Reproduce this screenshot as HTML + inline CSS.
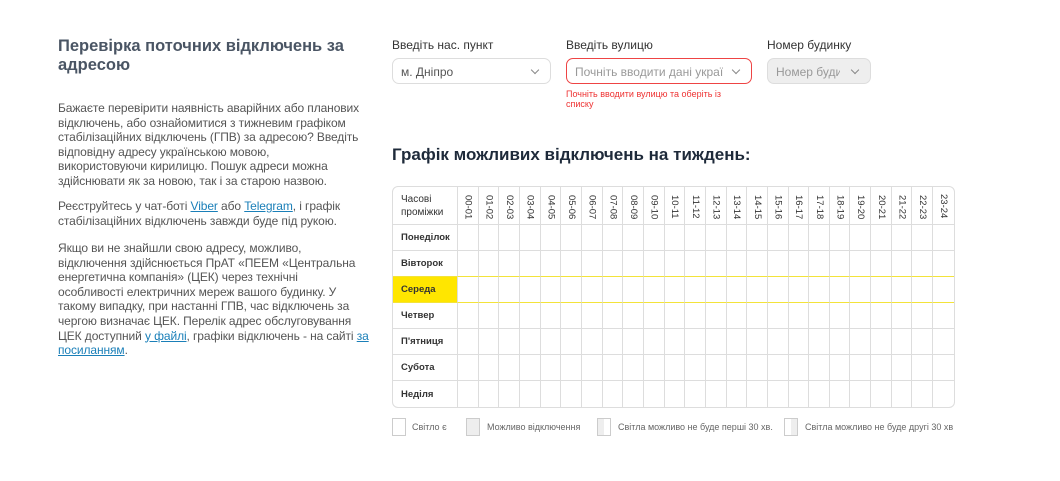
<!DOCTYPE html>
<html><head><meta charset="utf-8"><style>
*{box-sizing:border-box;margin:0;padding:0}
body{width:1060px;height:481px;background:#fff;font-family:"Liberation Sans",sans-serif;position:relative;overflow:hidden}
.l{position:absolute;left:58px;color:#555;font-size:12px;line-height:14.6px;white-space:nowrap;letter-spacing:-0.1px}
h1{position:absolute;left:58px;top:37px;font-size:16.5px;line-height:19px;color:#4a5564;font-weight:bold;width:300px}
a{color:#1a7fb8;text-decoration:underline}
.lab{position:absolute;top:38px;font-size:12px;color:#333}
.in{position:absolute;top:58px;height:26px;border:1px solid #ddd;border-radius:7px;font-size:12px;color:#555;padding:6px 8px}
.in span{display:block;white-space:nowrap;overflow:hidden}
.in:after{content:"";position:absolute;right:12px;top:8px;width:5px;height:5px;border-right:1px solid #888;border-bottom:1px solid #888;transform:rotate(45deg)}
.err{position:absolute;left:566px;top:89px;font-size:9px;line-height:10px;color:#e33;width:180px}
h2{position:absolute;left:392px;top:145px;font-size:17px;color:#1e2a3a;font-weight:bold}
table{position:absolute;left:392px;top:186px;border-collapse:separate;border-spacing:0;border:1px solid #ddd;border-radius:6px;width:563px;table-layout:fixed}
td{border-right:1px solid #ddd;border-bottom:1px solid #ddd;height:26px;font-size:9.5px;font-weight:bold;color:#333}
tr td:last-child{border-right:none}
tr:last-child td{border-bottom:none}
td.d{width:65px;padding-left:8px}
tr.h td{height:38px}
tr.h td.t{writing-mode:vertical-rl;text-align:left;padding-top:7px;font-weight:normal;font-size:9.5px;color:#333;vertical-align:top;line-height:20px}
tr.y td{border-bottom:1px solid #f3e33a}
tr.py td{border-bottom:1px solid #f3e33a}
tr.y td.d{background:#ffe600}
.lg{position:absolute;top:422px;font-size:9px;color:#666}
.bx{position:absolute;top:418px;width:14px;height:18px;border:1px solid #ccc}
</style></head><body>
<h1>Перевірка поточних відключень за адресою</h1>
<div class="l" style="top:101px">Бажаєте перевірити наявність аварійних або планових<br>відключень, або ознайомитися з тижневим графіком<br>стабілізаційних відключень (ГПВ) за адресою? Введіть<br>відповідну адресу українською мовою,<br>використовуючи кирилицю. Пошук адреси можна<br>здійснювати як за новою, так і за старою назвою.</div>
<div class="l" style="top:199px">Реєструйтесь у чат-боті <a>Viber</a> або <a>Telegram</a>, і графік<br>стабілізаційних відключень завжди буде під рукою.</div>
<div class="l" style="top:241px">Якщо ви не знайшли свою адресу, можливо,<br>відключення здійснюється ПрАТ «ПЕЕМ «Центральна<br>енергетична компанія» (ЦЕК) через технічні<br>особливості електричних мереж вашого будинку. У<br>такому випадку, при настанні ГПВ, час відключень за<br>чергою визначає ЦЕК. Перелік адрес обслуговування<br>ЦЕК доступний <a>у файлі</a>, графіки відключень - на сайті <a>за</a><br><a>посиланням</a>.</div>
<div class="lab" style="left:392px">Введіть нас. пункт</div>
<div class="lab" style="left:566px">Введіть вулицю</div>
<div class="lab" style="left:767px">Номер будинку</div>
<div class="in" style="left:392px;width:159px"><span>м. Дніпро</span></div>
<div class="in" style="left:566px;width:186px;border-color:#e44;color:#999;padding-right:28px"><span>Почніть вводити дані українською</span></div>
<div class="in" style="left:767px;width:104px;background:#eee;color:#999;padding-right:30px"><span>Номер будинку</span></div>
<div class="err">Почніть вводити вулицю та оберіть із списку</div>
<h2>Графік можливих відключень на тиждень:</h2>
<table>
<tr class="h"><td class="d" style="line-height:13px;font-weight:normal;font-size:10px">Часові проміжки</td>
<td class="t">00-01</td><td class="t">01-02</td><td class="t">02-03</td><td class="t">03-04</td><td class="t">04-05</td><td class="t">05-06</td><td class="t">06-07</td><td class="t">07-08</td><td class="t">08-09</td><td class="t">09-10</td><td class="t">10-11</td><td class="t">11-12</td><td class="t">12-13</td><td class="t">13-14</td><td class="t">14-15</td><td class="t">15-16</td><td class="t">16-17</td><td class="t">17-18</td><td class="t">18-19</td><td class="t">19-20</td><td class="t">20-21</td><td class="t">21-22</td><td class="t">22-23</td><td class="t">23-24</td></tr>
</table>
<div class="bx" style="left:392px"></div><div class="lg" style="left:412px">Світло є</div>
<div class="bx" style="left:466px;background:#eee"></div><div class="lg" style="left:487px">Можливо відключення</div>
<div class="bx" style="left:597px;background:linear-gradient(90deg,#eee 50%,#fff 50%)"></div><div class="lg" style="left:618px">Світла можливо не буде перші 30 хв.</div>
<div class="bx" style="left:784px;background:linear-gradient(90deg,#fff 50%,#eee 50%)"></div><div class="lg" style="left:805px">Світла можливо не буде другі 30 хв</div>
<script>
var t=document.querySelector('table');
["Понеділок","Вівторок","Середа","Четвер","П'ятниця","Субота","Неділя"].forEach(function(d,i){
var r=t.insertRow();if(i==2)r.className='y';if(i==1)r.className='py';
var c=r.insertCell();c.className='d';c.textContent=d;
for(var k=0;k<24;k++)r.insertCell();});
</script>
</body></html>
